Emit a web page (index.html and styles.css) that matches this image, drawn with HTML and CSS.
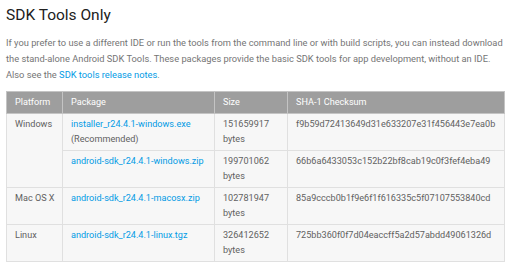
FILE: index.html
```html
<!DOCTYPE html>
<html lang="en">

<head>
  <meta charset="UTF-8">
  <meta name="viewport" content="width=device-width, initial-scale=1.0">
  <title>SDK Tools Only</title>
  <link rel="stylesheet" href="styles.css">
</head>

<body>
  <div class="sdk-section">
    <h2>SDK Tools Only</h2>

    <p class="intro">If you prefer to use a different IDE or run the tools from the command line or with build scripts, you can instead download the stand-alone Android SDK Tools. These packages provide the basic SDK tools for app development, without an IDE. Also see the <a href="#">SDK tools release notes</a>.</p>

    <table class="downloads">
      <colgroup>
        <col class="col-platform">
        <col class="col-package">
        <col class="col-size">
        <col class="col-sha">
      </colgroup>
      <thead>
        <tr>
          <th>Platform</th>
          <th>Package</th>
          <th>Size</th>
          <th>SHA-1 Checksum</th>
        </tr>
      </thead>
      <tbody>
        <tr>
          <td rowspan="2">Windows</td>
          <td><a href="#">installer_r24.4.1-windows.exe</a><br>(Recommended)</td>
          <td>151659917 bytes</td>
          <td>f9b59d72413649d31e633207e31f456443e7ea0b</td>
        </tr>
        <tr>
          <td><a href="#">android-sdk_r24.4.1-windows.zip</a></td>
          <td>199701062 bytes</td>
          <td>66b6a6433053c152b22bf8cab19c0f3fef4eba49</td>
        </tr>
        <tr>
          <td>Mac OS X</td>
          <td><a href="#">android-sdk_r24.4.1-macosx.zip</a></td>
          <td>102781947 bytes</td>
          <td>85a9cccb0b1f9e6f1f616335c5f07107553840cd</td>
        </tr>
        <tr>
          <td>Linux</td>
          <td><a href="#">android-sdk_r24.4.1-linux.tgz</a></td>
          <td>326412652 bytes</td>
          <td>725bb360f0f7d04eaccff5a2d57abdd49061326d</td>
        </tr>
      </tbody>
    </table>
  </div>
</body>

</html>
```

FILE: styles.css
```css
body {
  font-family: Roboto, 'Noto Sans', sans-serif;
  margin: 0;
  padding: 0 6px;
  background: white;
  color: #757575;
}

h2 {
  font-size: 15.5px;
  font-weight: 400;
  line-height: 20px;
  color: #212121;
  margin: 5px 0 10px;
}

.intro {
  font-size: 9.3px;
  line-height: 16px;
  margin: 0 0 8px;
}

a {
  color: #039be5;
  text-decoration: none;
}

.downloads {
  width: 499px;
  table-layout: fixed;
  border-collapse: collapse;
  font-size: 9.1px;
  line-height: 15.5px;
  color: #616161;
}

.col-platform {
  width: 56px;
}

.col-package {
  width: 152px;
}

.col-size {
  width: 73px;
}

.downloads th,
.downloads td {
  text-align: left;
  vertical-align: top;
  padding: 3px 4px 2px 8px;
  border: 1px solid #e0e0e0;
}

.downloads td:first-child {
  white-space: nowrap;
}

.downloads th {
  background: #9e9e9e;
  color: white;
  font-weight: 400;
  border-color: #c4c4c4;
}

.downloads td {
  background: #f7f7f7;
}
```
